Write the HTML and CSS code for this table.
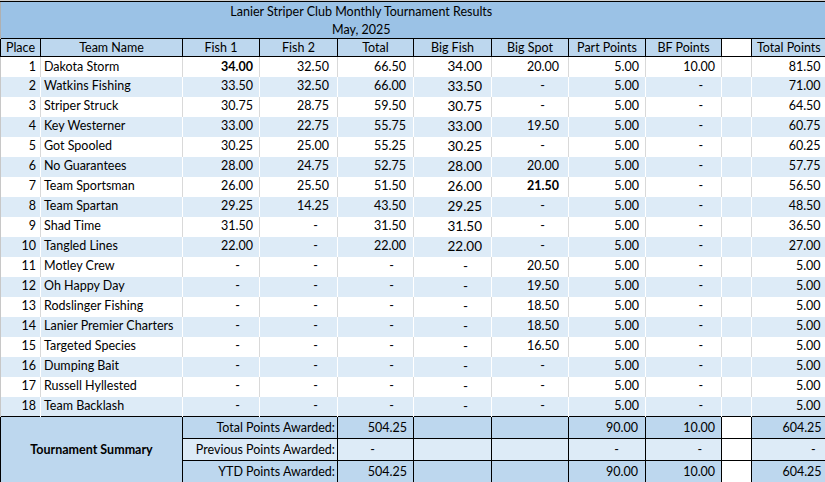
FILE: index.html
```html
<!DOCTYPE html>
<html lang="en">
<head>
<meta charset="utf-8">
<title>Lanier Striper Club Monthly Tournament Results</title>
<link rel="stylesheet" href="styles.css">
</head>
<body>
<div class="sheet">
<table class="results">
  <colgroup>
    <col class="c-place"><col class="c-team"><col class="c-f1"><col class="c-f2"><col class="c-tot"><col class="c-bf"><col class="c-bs"><col class="c-pp"><col class="c-bfp"><col class="c-gap"><col class="c-tp">
  </colgroup>
  <tbody>
    <tr class="title title-1"><td colspan="9">Lanier Striper Club Monthly Tournament Results</td><td colspan="2"></td></tr>
    <tr class="title title-2"><td colspan="9">May, 2025</td><td colspan="2"></td></tr>
    <tr class="head">
      <td>Place</td><td>Team Name</td><td>Fish 1</td><td>Fish 2</td><td>Total</td><td>Big Fish</td><td>Big Spot</td><td>Part Points</td><td>BF Points</td><td class="gap"></td><td>Total Points</td>
    </tr>
    <tr class="row"><td>1</td><td>Dakota Storm</td><td><b>34.00</b></td><td>32.50</td><td>66.50</td><td>34.00</td><td>20.00</td><td>5.00</td><td>10.00</td><td></td><td>81.50</td></tr>
    <tr class="row alt"><td>2</td><td>Watkins Fishing</td><td>33.50</td><td>32.50</td><td>66.00</td><td>33.50</td><td class="z">-</td><td>5.00</td><td class="z">-</td><td></td><td>71.00</td></tr>
    <tr class="row"><td>3</td><td>Striper Struck</td><td>30.75</td><td>28.75</td><td>59.50</td><td>30.75</td><td class="z">-</td><td>5.00</td><td class="z">-</td><td></td><td>64.50</td></tr>
    <tr class="row alt"><td>4</td><td>Key Westerner</td><td>33.00</td><td>22.75</td><td>55.75</td><td>33.00</td><td>19.50</td><td>5.00</td><td class="z">-</td><td></td><td>60.75</td></tr>
    <tr class="row"><td>5</td><td>Got Spooled</td><td>30.25</td><td>25.00</td><td>55.25</td><td>30.25</td><td class="z">-</td><td>5.00</td><td class="z">-</td><td></td><td>60.25</td></tr>
    <tr class="row alt"><td>6</td><td>No Guarantees</td><td>28.00</td><td>24.75</td><td>52.75</td><td>28.00</td><td>20.00</td><td>5.00</td><td class="z">-</td><td></td><td>57.75</td></tr>
    <tr class="row"><td>7</td><td>Team Sportsman</td><td>26.00</td><td>25.50</td><td>51.50</td><td>26.00</td><td><b>21.50</b></td><td>5.00</td><td class="z">-</td><td></td><td>56.50</td></tr>
    <tr class="row alt"><td>8</td><td>Team Spartan</td><td>29.25</td><td>14.25</td><td>43.50</td><td>29.25</td><td class="z">-</td><td>5.00</td><td class="z">-</td><td></td><td>48.50</td></tr>
    <tr class="row"><td>9</td><td>Shad Time</td><td>31.50</td><td class="z">-</td><td>31.50</td><td>31.50</td><td class="z">-</td><td>5.00</td><td class="z">-</td><td></td><td>36.50</td></tr>
    <tr class="row alt"><td>10</td><td>Tangled Lines</td><td>22.00</td><td class="z">-</td><td>22.00</td><td>22.00</td><td class="z">-</td><td>5.00</td><td class="z">-</td><td></td><td>27.00</td></tr>
    <tr class="row"><td>11</td><td>Motley Crew</td><td class="z">-</td><td class="z">-</td><td class="z">-</td><td class="z">-</td><td>20.50</td><td>5.00</td><td class="z">-</td><td></td><td>5.00</td></tr>
    <tr class="row alt"><td>12</td><td>Oh Happy Day</td><td class="z">-</td><td class="z">-</td><td class="z">-</td><td class="z">-</td><td>19.50</td><td>5.00</td><td class="z">-</td><td></td><td>5.00</td></tr>
    <tr class="row"><td>13</td><td>Rodslinger Fishing</td><td class="z">-</td><td class="z">-</td><td class="z">-</td><td class="z">-</td><td>18.50</td><td>5.00</td><td class="z">-</td><td></td><td>5.00</td></tr>
    <tr class="row alt"><td>14</td><td>Lanier Premier Charters</td><td class="z">-</td><td class="z">-</td><td class="z">-</td><td class="z">-</td><td>18.50</td><td>5.00</td><td class="z">-</td><td></td><td>5.00</td></tr>
    <tr class="row"><td>15</td><td>Targeted Species</td><td class="z">-</td><td class="z">-</td><td class="z">-</td><td class="z">-</td><td>16.50</td><td>5.00</td><td class="z">-</td><td></td><td>5.00</td></tr>
    <tr class="row alt"><td>16</td><td>Dumping Bait</td><td class="z">-</td><td class="z">-</td><td class="z">-</td><td class="z">-</td><td class="z">-</td><td>5.00</td><td class="z">-</td><td></td><td>5.00</td></tr>
    <tr class="row"><td>17</td><td>Russell Hyllested</td><td class="z">-</td><td class="z">-</td><td class="z">-</td><td class="z">-</td><td class="z">-</td><td>5.00</td><td class="z">-</td><td></td><td>5.00</td></tr>
    <tr class="row alt"><td>18</td><td>Team Backlash</td><td class="z">-</td><td class="z">-</td><td class="z">-</td><td class="z">-</td><td class="z">-</td><td>5.00</td><td class="z">-</td><td></td><td>5.00</td></tr>
    <tr class="sum">
      <td colspan="2" rowspan="3" class="sum-title">Tournament Summary</td>
      <td colspan="2" class="label">Total Points Awarded:</td>
      <td class="v-tot">504.25</td><td></td><td></td><td class="v-pp">90.00</td><td class="v-bf">10.00</td><td class="gap"></td><td class="v-tp">604.25</td>
    </tr>
    <tr class="sum sum-light">
      <td colspan="2" class="label">Previous Points Awarded:</td>
      <td class="v-tot z">-</td><td></td><td></td><td class="v-pp z">-</td><td class="v-bf z">-</td><td class="gap"></td><td class="v-tp z">-</td>
    </tr>
    <tr class="sum">
      <td colspan="2" class="label">YTD Points Awarded:</td>
      <td class="v-tot">504.25</td><td></td><td></td><td class="v-pp">90.00</td><td class="v-bf">10.00</td><td class="gap"></td><td class="v-tp">604.25</td>
    </tr>
  </tbody>
</table>
</div>
</body>
</html>
```

FILE: styles.css
```css
* { box-sizing: border-box; }
html, body { margin: 0; padding: 0; background: #fff; }
body {
  font-family: Lato, "Open Sans", "Liberation Sans", sans-serif;
  font-size: 12.5px;
  color: #000;
}
.sheet {
  width: 825px;
  height: 482px;
  overflow: hidden;
  border-top: 1px solid #d0d0d0;
}
.results {
  border-collapse: collapse;
  table-layout: fixed;
  width: 825px;
}
.c-place { width: 40px; }
.c-team { width: 142px; }
.c-f1 { width: 77px; }
.c-f2 { width: 78px; }
.c-tot { width: 76px; }
.c-bf { width: 78px; }
.c-bs { width: 77px; }
.c-pp { width: 77px; }
.c-bfp { width: 76px; }
.c-gap { width: 30px; }
.c-tp { width: 74px; }

.results td {
  padding: 0;
  white-space: nowrap;
  overflow: hidden;
  line-height: 1;
  vertical-align: middle;
}

/* title */
.title td {
  background: #9bc2e6;
  text-align: center;
  border-left: 1px solid #b0b0b0;
  padding-top: 2px;
}
.title td + td { border-left: none; }
.title-1 td { border-top: 1px solid #000; height: 19px; }
.title-2 td { height: 18px; }

/* header */
.head td {
  height: 18px;
  background: #bdd7ee;
  border: 1px solid #000;
  text-align: center;
  padding-top: 1px;
}
.head td:last-child { border-right: none; }
.head td.gap { background: #fff; }

/* data rows */
.row td {
  height: 20px;
  text-align: right;
  border-left: 1px solid #d9d9d9;
  background: #fff;
}
.row.alt td { background: #ddebf7; border-left-color: #fff; }
.row td:nth-child(1) { padding-right: 4px; border-left-color: #c8c8c8; }
.row td:nth-child(2) { text-align: left; padding-left: 3px; }
.row td:nth-child(3) { padding-right: 6px; }
.row td:nth-child(4) { padding-right: 8px; }
.row td:nth-child(5) { padding-right: 7px; }
.row td:nth-child(6) { padding-right: 9px; font-size: 13.5px; }
.row td:nth-child(7) { padding-right: 9px; }
.row td:nth-child(8) { padding-right: 6px; }
.row td:nth-child(9) { padding-right: 6px; }
.row td:nth-child(11) { padding-right: 5px; }
.row td.z { padding-right: 19px; }
.row td.z:nth-child(6), .row td.z:nth-child(7) { padding-right: 23px; }
.row td.z:nth-child(9) { padding-right: 18px; }

/* summary */
.sum td {
  height: 22px;
  border: 1px solid #000;
  background: #bdd7ee;
  text-align: right;
  padding-top: 1px;
}
.sum td:last-child { border-right: none; }
.sum-light td { background: #ddebf7; }
.sum td.gap { background: #fff; }
.sum td.sum-title {
  background: #bdd7ee;
  text-align: center;
  font-weight: bold;
}
.sum td.label { padding-right: 2px; }
.sum td.v-tot { padding-right: 6px; }
.sum td.v-pp { padding-right: 7px; }
.sum td.v-bf { padding-right: 6px; }
.sum td.v-tp { padding-right: 4px; }
.sum td.v-tot.z { padding-right: 38px; }
.sum td.v-pp.z { padding-right: 26px; }
.sum td.v-bf.z { padding-right: 19px; }
.sum td.v-tp.z { padding-right: 10px; }
```
